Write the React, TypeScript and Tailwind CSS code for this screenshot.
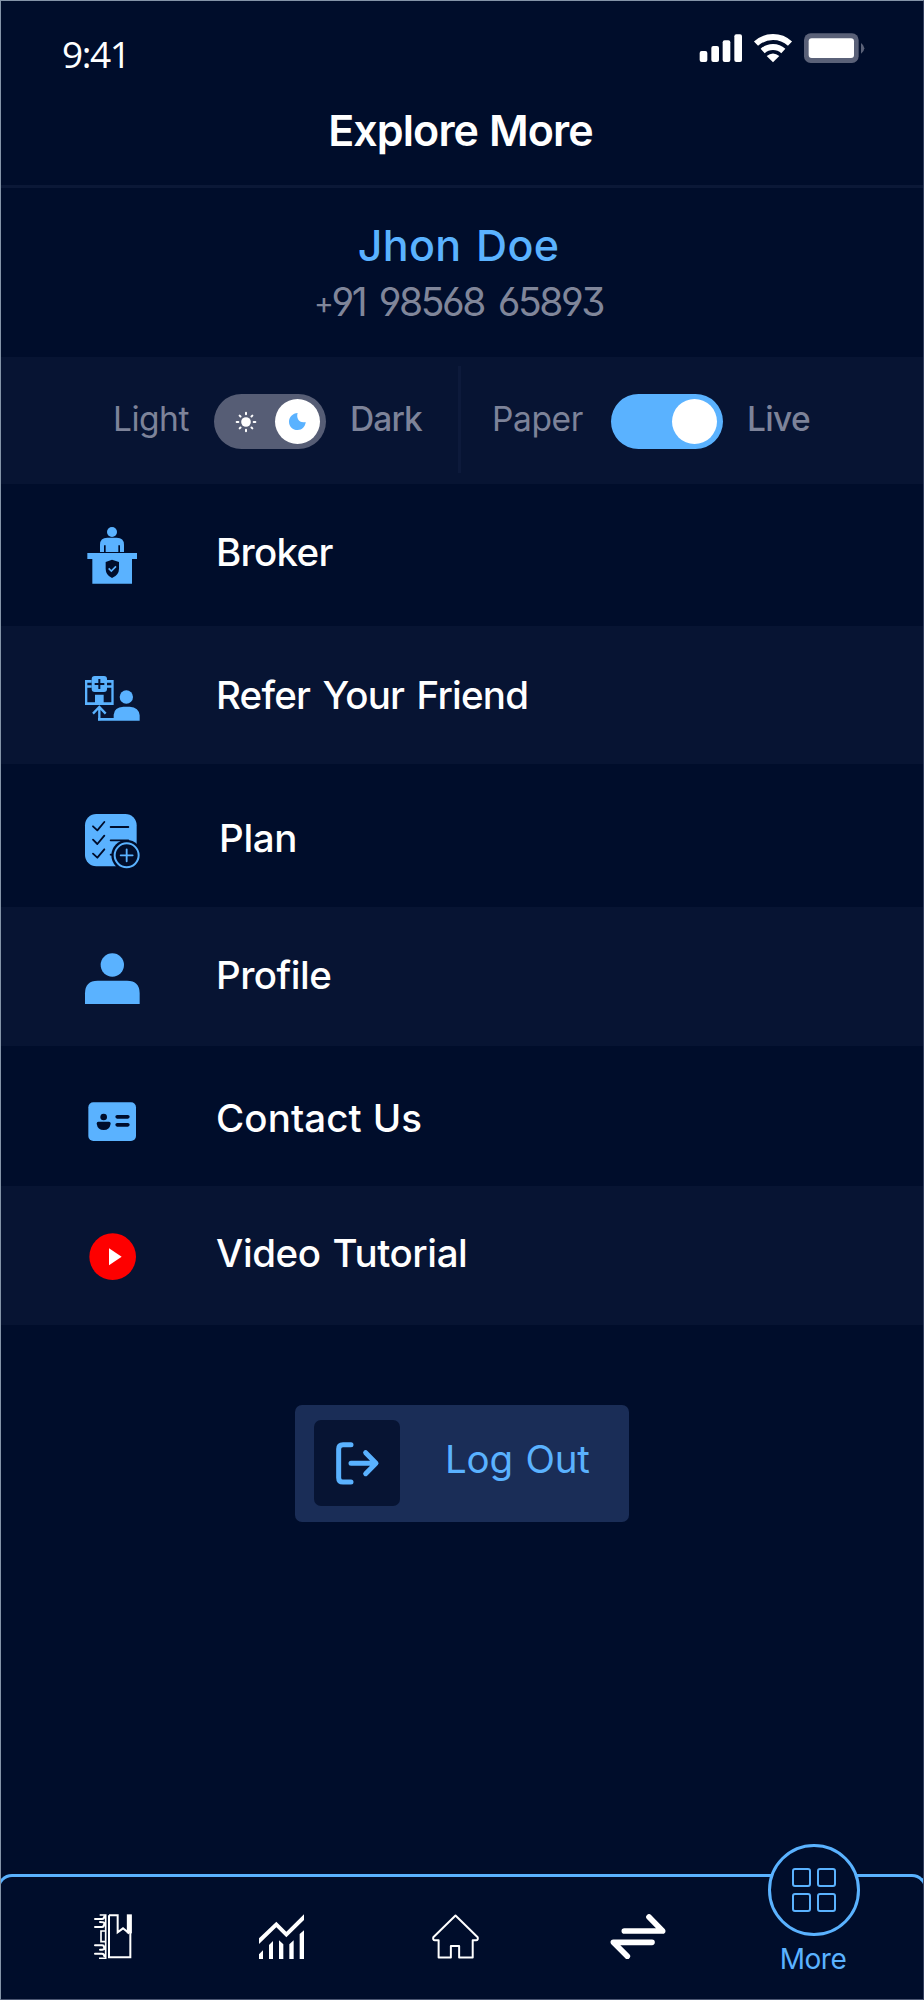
import type { ReactNode } from "react";

function StatusIcons() {
  return (
    <svg className="w-[166px] h-[30px]" viewBox="711 99 498 90" fill="#fff">
      <rect x="713" y="153" width="23" height="33" rx="6" />
      <rect x="748" y="138" width="23" height="48" rx="6" />
      <rect x="782" y="121" width="23" height="65" rx="6" />
      <rect x="817" y="103" width="23" height="83" rx="6" />
      <g fill="none" stroke="#fff" strokeWidth="18">
        <path d="M882 131 A75 75 0 0 1 984 131" />
        <path d="M902 153 A46 46 0 0 1 964 153" />
      </g>
      <path d="M933 187 L914 168 Q933 153 952 168 Z" />
      <rect x="1026" y="100" width="164" height="89" rx="20" fill="#5a6178" />
      <rect x="1040" y="115" width="136" height="59" rx="9" />
      <path d="M1197 129 Q1207 136 1207 145 Q1207 154 1197 161 Z" fill="#5a6178" />
    </svg>
  );
}

function BrokerIcon() {
  return (
    <svg className="w-[56px] h-[60px]" viewBox="72 105 168 180" fill="#5ab2ff">
      <circle cx="156" cy="126" r="15" />
      <path d="M120 186 V164 Q120 143 142 143 H170 Q192 143 192 164 V186 H180 V166 H175 V186 H137 V166 H132 V186 Z" />
      <path d="M82 189 H231 V207 H216 V281 H97 V207 H82 Z" />
      <path d="M156 209 L177 216 V236 Q177 255 156 264 Q137 255 137 236 V216 Z" fill="#000d2b" />
      <path d="M146 235 L154 243 L168 229" fill="none" stroke="#5ab2ff" strokeWidth="5" />
    </svg>
  );
}

function ReferIcon() {
  return (
    <svg className="w-[56px] h-[60px]" viewBox="72 540 168 180" fill="#5ab2ff">
      <path d="M75 570 H95 V578 H82 V586 H95 V593 H82 V637 H105 V614 H131 V637 H154 V593 H141 V586 H154 V578 H141 V570 H161 V645 H75 Z" />
      <rect x="95" y="558" width="46" height="48" rx="9" />
      <path d="M118 567 V597 M104 582 H133" stroke="#071433" strokeWidth="6" />
      <circle cx="199" cy="621" r="20" />
      <path d="M161 684 V674 Q163 651 190 650 H209 Q237 652 239 676 V692 H114 V684 Z" />
      <path d="M118 691 V652 M99 671 L118 651 L137 671" fill="none" stroke="#5ab2ff" strokeWidth="7" />
    </svg>
  );
}

function PlanIcon() {
  return (
    <svg className="w-[56px] h-[60px]" viewBox="72 90 168 180">
      <rect x="75" y="102" width="155" height="157" rx="34" fill="#5ab2ff" />
      <g fill="none" stroke="#000d2b" strokeWidth="5.5" strokeLinecap="round" strokeLinejoin="round">
        <path d="M99 139 L112 151 L133 126" />
        <path d="M99 179 L112 192 L133 167" />
        <path d="M99 221 L112 233 L133 208" />
        <path d="M152 141 H205 M152 181 H205 M152 224 H165" />
      </g>
      <circle cx="200" cy="226" r="46" fill="#000d2b" />
      <circle cx="200" cy="226" r="36" fill="none" stroke="#5ab2ff" strokeWidth="6" />
      <path d="M200 208 V244 M182 226 H218" stroke="#5ab2ff" strokeWidth="5.5" strokeLinecap="round" />
    </svg>
  );
}

function ProfileIcon() {
  return (
    <svg className="w-[56px] h-[60px]" viewBox="72 510 168 180" fill="#5ab2ff">
      <circle cx="157" cy="555" r="35" />
      <path d="M75 672 V640 Q75 602 113 602 H201 Q239 602 239 640 V672 Z" />
    </svg>
  );
}

function ContactIcon() {
  return (
    <svg className="w-[56px] h-[60px]" viewBox="72 36 168 180" fill="#000d2b">
      <rect x="85" y="67" width="143" height="116" rx="15" fill="#5ab2ff" />
      <circle cx="131" cy="111" r="10" />
      <path d="M115 125 H147 Q152 125 152 131 Q149 150 131 150 Q113 150 110 131 Q110 125 115 125 Z" />
      <rect x="166" y="105" width="43" height="11" rx="5.5" />
      <rect x="166" y="129" width="43" height="11" rx="5.5" />
    </svg>
  );
}

function VideoIcon() {
  return (
    <svg className="w-[56px] h-[60px]" viewBox="72 444 168 180">
      <circle cx="158" cy="530" r="70" fill="#fe0000" />
      <path d="M147 505 L185 530 L147 556 Z" fill="#fff" />
    </svg>
  );
}

function SunIcon() {
  return (
    <svg className="w-[22px] h-[22px]" viewBox="-33 -33 66 66" stroke="#fff" strokeWidth="6" strokeLinecap="round">
      <circle r="14.5" fill="#fff" stroke="none" />
      <path d="M0 -28 V-23 M0 23 V28 M-28 0 H-23 M23 0 H28 M-19 -19 L-16.500 -16.500 M16.500 16.500 L19 19 M-19 19 L-16.500 16.500 M16.500 -16.500 L19 -19" />
    </svg>
  );
}

type MenuRowProps = {
  label: string;
  icon: ReactNode;
  rowClass: string;
  iconClass: string;
  labelClass: string;
};

function MenuRow({ label, icon, rowClass, iconClass, labelClass }: MenuRowProps) {
  return (
    <li className={`flex items-start pl-[83px] ${rowClass}`}>
      <span className={iconClass}>{icon}</span>
      <span className={`text-[38.5px] leading-[40px] font-medium text-white whitespace-nowrap ${labelClass}`}>
        {label}
      </span>
    </li>
  );
}

const menu: MenuRowProps[] = [
  { label: "Broker", icon: <BrokerIcon />, rowClass: "h-[142px]", iconClass: "mt-[41px]", labelClass: "mt-[48px] ml-[76px] tracking-[-0.7px]" },
  { label: "Refer Your Friend", icon: <ReferIcon />, rowClass: "h-[138px] bg-[#071433]", iconClass: "mt-[44px]", labelClass: "mt-[49px] ml-[76px] tracking-[-0.8px] [word-spacing:3px]" },
  { label: "Plan", icon: <PlanIcon />, rowClass: "h-[143px]", iconClass: "mt-[46px]", labelClass: "mt-[54px] ml-[79px] tracking-[-0.3px]" },
  { label: "Profile", icon: <ProfileIcon />, rowClass: "h-[139px] bg-[#071433]", iconClass: "mt-[43px]", labelClass: "mt-[48px] ml-[76px] tracking-[-0.5px]" },
  { label: "Contact Us", icon: <ContactIcon />, rowClass: "h-[140px]", iconClass: "mt-[46px]", labelClass: "mt-[52px] ml-[76px] tracking-[0.1px] [word-spacing:0.5px]" },
  { label: "Video Tutorial", icon: <VideoIcon />, rowClass: "h-[139px] bg-[#071433]", iconClass: "mt-[42px]", labelClass: "mt-[47px] ml-[76px] tracking-[-0.4px] [word-spacing:2px]" },
];

function BottomNav() {
  return (
    <nav className="mt-auto -mx-[4px] h-[125px] shrink-0 flex items-start border-[3px] border-b-0 border-[#5ab2ff] rounded-t-[15px] pl-[94px]">
      <svg className="mt-[37px] w-[38px] h-[45px]" viewBox="282 252 114 135" fill="none" stroke="#fff" strokeWidth="6">
        <path d="M327 256 H353 V307 L369 295 L384 307 V256 M327 256 V382 H391 V256" />
        <path d="M388 253 V310" strokeWidth="15" />
        <path d="M299 255 H317 V385 H297 M317 303 H303 V335 H317" strokeWidth="5" />
        <path d="M285 267 H306 Q313 267 313 259 M285 291 H306 Q313 291 313 280 Q313 276 300 276 M285 346 H306 Q313 346 313 356 Q313 359 300 359 M285 371 H306 Q313 371 313 379" strokeWidth="6" strokeLinecap="round" />
      </svg>
      <svg className="mt-[37px] ml-[127px] w-[45px] h-[45px]" viewBox="777 252 135 135" fill="#fff">
        <path d="M777 325 L829 275 L859 305 L912 253 V270 L859 322 L829 292 L777 342 Z" />
        <path d="M777 373 L789 361 V387 H777 Z M807 345 L819 333 V387 H807 Z M837 331 L850 343 V387 H837 Z M868 343 L881 331 V387 H868 Z M899 312 L912 301 V387 H899 Z" />
      </svg>
      <svg className="mt-[37px] ml-[128px] w-[47px] h-[45px]" viewBox="306 252 142 135" fill="none" stroke="#fff" strokeWidth="6" strokeLinejoin="round">
        <path d="M377 256 L444 322 Q446 330 439 331 H429 V383 H388 V348 H363 V383 H326 V331 H315 Q308 330 310 322 Z" />
      </svg>
      <svg className="mt-[37px] ml-[131px] w-[56px] h-[45px]" viewBox="840 252 168 135" fill="none" stroke="#fff" strokeWidth="17" strokeLinecap="round" strokeLinejoin="round">
        <path d="M883 303 H998 L957 261" />
        <path d="M966 337 H850 L892 379" />
      </svg>
      <div className="-mt-[33px] ml-[83px] w-[130px] flex flex-col items-center">
        <div className="w-[92px] h-[92px] rounded-full border-[3px] border-[#5ab2ff] bg-[#000d2b] grid grid-cols-[19px_19px] gap-[6px] place-content-center">
          <i className="w-[19px] h-[19px] border-2 border-[#5ab2ff] rounded-[3px]" />
          <i className="w-[19px] h-[19px] border-2 border-[#5ab2ff] rounded-[3px]" />
          <i className="w-[19px] h-[19px] border-2 border-[#5ab2ff] rounded-[3px]" />
          <i className="w-[19px] h-[19px] border-2 border-[#5ab2ff] rounded-[3px]" />
        </div>
        <span className="mt-[8px] mr-[2px] text-[28px] leading-[30px] text-[#5ab2ff] tracking-[-0.5px]">More</span>
      </div>
    </nav>
  );
}

export default function App() {
  return (
    <div className="w-[924px] h-[2000px] flex flex-col overflow-hidden bg-[#000d2b] border border-t-[#8494a8] border-l-[#8494a8] border-r-[#35415f] border-b-[#4b5672] font-['Inter',sans-serif]">
      <header className="h-[187px] shrink-0 border-b-[3px] border-[#0b1837]">
        <div className="h-[96px] flex items-start justify-between pl-[61px] pr-[58px]">
          <span className="mt-[30px] text-[37px] leading-[46px] text-white font-['Open_Sans',sans-serif] tracking-[-1.4px]">9:41</span>
          <span className="mt-[32px]"><StatusIcons /></span>
        </div>
        <h1 className="mt-[8px] pr-[3px] text-center text-[43px] leading-[50px] font-semibold text-white tracking-[-0.9px] [word-spacing:1px]">Explore More</h1>
      </header>

      <section className="h-[169px] shrink-0 pt-[32px] pr-[7px] text-center">
        <h2 className="text-[43px] leading-[50px] font-medium text-[#5ab2ff] tracking-[0.3px] [word-spacing:3px]">Jhon Doe</h2>
        <p className="mt-[12px] text-[39px] leading-[40px] text-[#80869a] [font-feature-settings:'ss01'] tracking-[-2.4px] [word-spacing:5px]">
          <span className="inline-block -translate-y-[2px] text-[30px]">+</span>91 98568 65893
        </p>
      </section>

      <section className="h-[127px] shrink-0 flex items-start bg-[#071433] text-[#7d8399] text-[33.5px] leading-[36px]">
        <div className="w-[457px] flex pl-[112px]">
          <span className="mt-[44px] w-[101px] tracking-[-0.5px]">Light</span>
          <div className="mt-[37px] w-[112px] h-[55px] rounded-full bg-[#565d75] flex items-center justify-between pl-[21px] pr-[6px]">
            <SunIcon />
            <span className="w-[45px] h-[45px] rounded-full bg-white flex items-center justify-center">
              <svg className="w-[17px] h-[17px]" viewBox="0 0 51 51" fill="#5ab2ff">
                <path d="M26 0 C21 14 30 32 50 27 C49 41 39 51 26 51 C11 51 0 40 0 26 C0 12 11 1 26 0 Z" />
              </svg>
            </span>
          </div>
          <span className="mt-[44px] ml-[24px] font-medium tracking-[-0.9px]">Dark</span>
        </div>
        <div className="mt-[9px] w-[3px] h-[107px] bg-[#0d1a3b]" />
        <div className="flex pl-[31px]">
          <span className="mt-[44px] w-[119px] tracking-[-0.4px]">Paper</span>
          <div className="mt-[37px] w-[112px] h-[55px] rounded-full bg-[#5ab2ff] flex items-center justify-end pr-[6px]">
            <span className="w-[45px] h-[45px] rounded-full bg-white" />
          </div>
          <span className="mt-[44px] ml-[24px] font-medium tracking-[-0.7px]">Live</span>
        </div>
      </section>

      <ul className="shrink-0">
        {menu.map((row) => (
          <MenuRow key={row.label} {...row} />
        ))}
      </ul>

      <button className="mt-[80px] ml-[294px] w-[334px] h-[117px] shrink-0 rounded-[7px] bg-[#1a2d57] flex items-start pl-[19px] text-left">
        <span className="mt-[15px] w-[86px] h-[86px] rounded-[7px] bg-[#071433]">
          <svg className="w-[86px] h-[86px]" viewBox="102 91 258 258" fill="none" stroke="#5ab2ff" strokeWidth="15" strokeLinecap="round" strokeLinejoin="round">
            <path d="M213 165 H189 Q176 165 176 178 V264 Q176 277 189 277 H213" />
            <path d="M213 221 H287 M257 189 L288 221 L257 252" />
          </svg>
        </span>
        <span className="mt-[34px] ml-[45px] text-[38.5px] leading-[40px] text-[#5ab2ff] whitespace-nowrap tracking-[-0.2px] [word-spacing:2px]">Log Out</span>
      </button>

      <BottomNav />
    </div>
  );
}
